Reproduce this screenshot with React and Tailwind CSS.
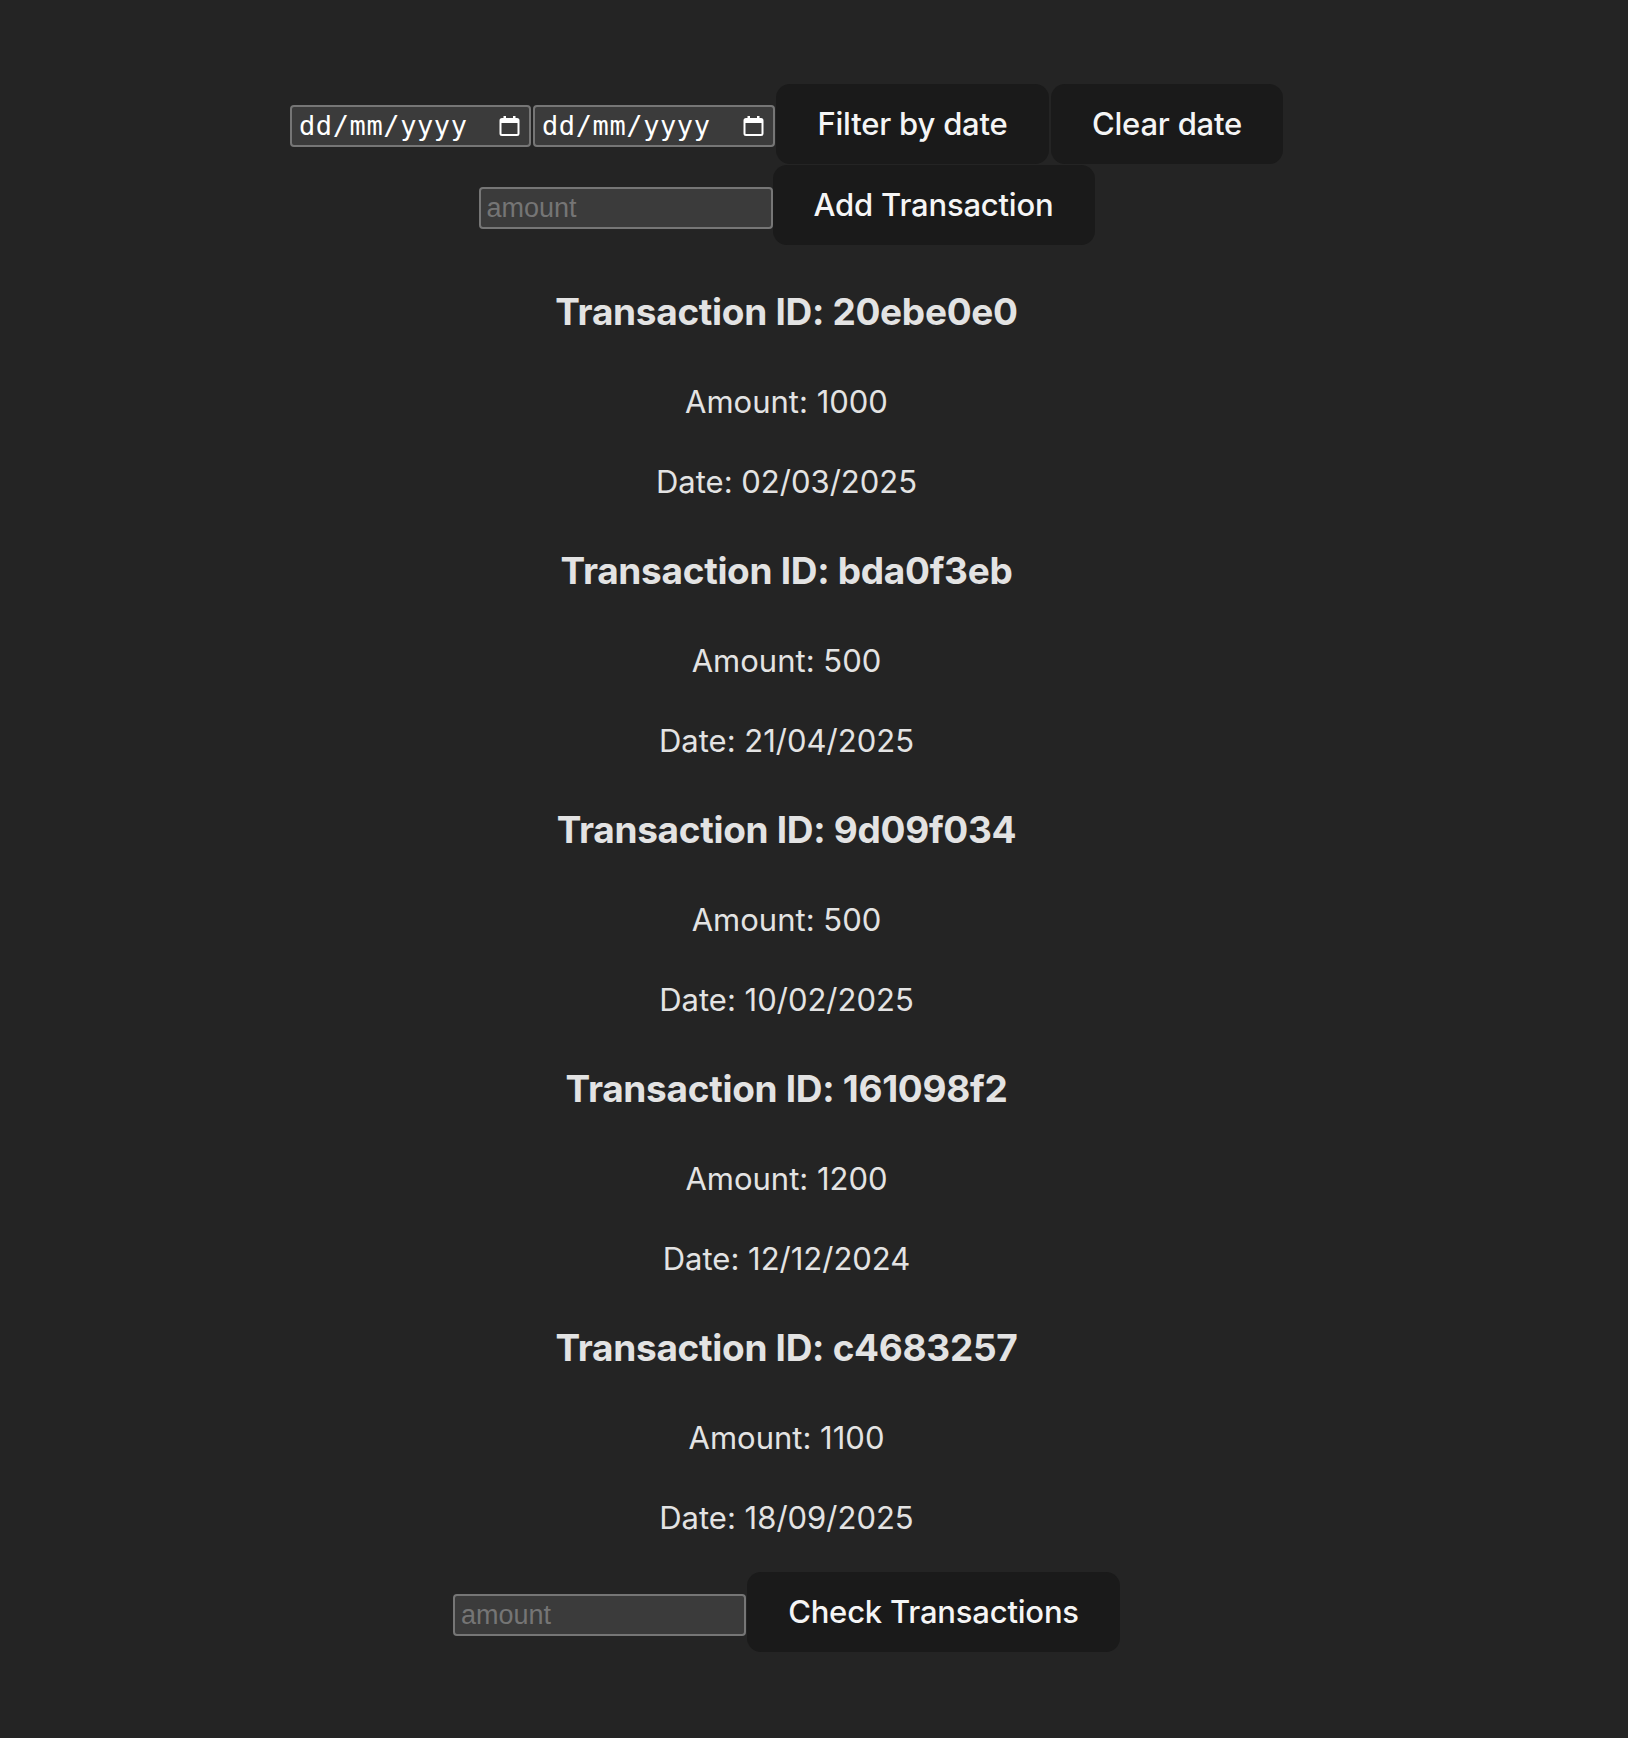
import React from "react";

function CalendarIcon() {
  return (
    <svg width="21" height="22" viewBox="0 0 21 22" className="shrink-0">
      <rect x="1.5" y="4" width="18" height="16" rx="1.5" fill="none" stroke="#ffffff" strokeWidth="2" />
      <rect x="1.5" y="4" width="18" height="4" fill="#ffffff" />
      <rect x="4.5" y="1" width="2.5" height="4" fill="#ffffff" />
      <rect x="14" y="1" width="2.5" height="4" fill="#ffffff" />
    </svg>
  );
}

function DateInput({ className }) {
  return (
    <div
      className={
        "h-[42px] flex items-center justify-between pl-[7px] pr-[9px] bg-[#3b3b3b] border-2 border-[#767676] rounded-[4px] text-white text-[27px] " +
        className
      }
      style={{ fontFamily: '"DejaVu Sans Mono", monospace' }}
    >
      <span className="tracking-[0.6px]">dd/mm/yyyy</span>
      <CalendarIcon />
    </div>
  );
}

function AmountInput({ className }) {
  return (
    <input
      type="text"
      placeholder="amount"
      className={
        "h-[42px] px-[6px] bg-[#3b3b3b] border-2 border-[#767676] rounded-[4px] text-white text-[27px] placeholder:text-[#757575] outline-none " +
        className
      }
      style={{ fontFamily: '"Liberation Sans", Arial, sans-serif' }}
    />
  );
}

function Btn({ children, className }) {
  return (
    <button
      className={
        "h-[80px] rounded-[14px] bg-[#1a1a1a] text-[#f5f5f5] text-[31px] font-medium flex items-center justify-center tracking-[-0.2px] " +
        className
      }
    >
      {children}
    </button>
  );
}

const txs = [
  { id: "20ebe0e0", amount: 1000, date: "02/03/2025" },
  { id: "bda0f3eb", amount: 500, date: "21/04/2025" },
  { id: "9d09f034", amount: 500, date: "10/02/2025" },
  { id: "161098f2", amount: 1200, date: "12/12/2024" },
  { id: "c4683257", amount: 1100, date: "18/09/2025" },
];

export default function App() {
  return (
    <div
      className="min-h-screen w-full bg-[#242424] text-[#e3e3e3] pt-[84px] pr-[55px] pb-[87px] flex flex-col items-center"
      style={{ fontFamily: 'Inter, "Noto Sans", sans-serif' }}
    >
      <div className="flex items-start">
        <DateInput className="w-[241px] mt-[21px]" />
        <DateInput className="w-[242px] mt-[21px] ml-[2px]" />
        <Btn className="w-[273px] ml-[1px] h-[79px]">Filter by date</Btn>
        <Btn className="w-[232px] ml-[2px] h-[79px]">Clear date</Btn>
      </div>
      <div className="flex items-start mt-[1px]">
        <AmountInput className="w-[294px] mt-[22px]" />
        <Btn className="w-[322px]">Add Transaction</Btn>
      </div>

      {txs.map((t, i) => (
        <div key={t.id} className={"flex flex-col items-center " + (i === 0 ? "mt-[39px]" : "mt-[37px]")}>
          <h3 className="text-[37px] leading-[56px] font-bold tracking-[-0.3px]">Transaction ID: {t.id}</h3>
          <p className="mt-[38px] text-[31px] leading-[48px]">Amount: {t.amount}</p>
          <p className="mt-[32px] text-[31px] leading-[48px]">Date: {t.date}</p>
        </div>
      ))}

      <div className="flex items-start mt-[30px]">
        <AmountInput className="w-[293px] mt-[22px]" />
        <Btn className="w-[373px] h-[79px] ml-[1px]">Check Transactions</Btn>
      </div>
    </div>
  );
}
